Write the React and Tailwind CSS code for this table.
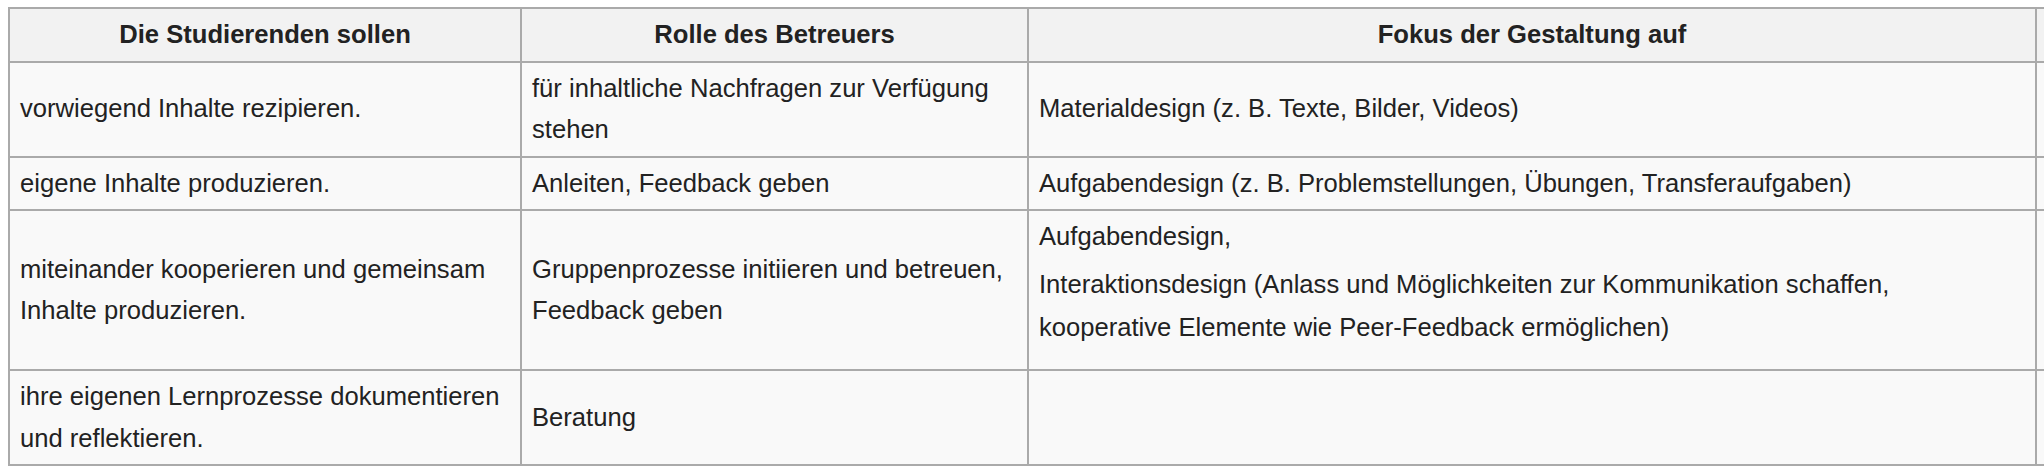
import React from "react";

const cellBorder = "border-r-2 border-b-2 border-[#aaaaaa]";
const th = `${cellBorder} bg-[#f2f2f2] font-bold px-[10px] py-[5px] flex items-center justify-center text-center`;
const td = `${cellBorder} bg-[#f9f9f9] px-[10px] py-[5px] flex flex-col justify-center`;

export default function App() {
  return (
    <div
      className="w-[2044px] h-[472px] overflow-hidden bg-white pl-[8px] pt-[7px] text-[#222222] text-[25.6px] leading-[41.5px]"
      style={{ fontFamily: '"Liberation Sans", Arial, Helvetica, sans-serif' }}
    >
      <div className="grid grid-cols-[512px_507px_1008px_400px] w-max border-l-2 border-t-2 border-[#aaaaaa]">
        <div className={th}>Die Studierenden sollen</div>
        <div className={th}>Rolle des Betreuers</div>
        <div className={th}>Fokus der Gestaltung auf</div>
        <div className={th}></div>

        <div className={td}>vorwiegend Inhalte rezipieren.</div>
        <div className={td}>
          <span>
            für inhaltliche Nachfragen zur Verfügung
            <br />
            stehen
          </span>
        </div>
        <div className={td}>Materialdesign (z. B. Texte, Bilder, Videos)</div>
        <div className={td}></div>

        <div className={td}>eigene Inhalte produzieren.</div>
        <div className={td}>Anleiten, Feedback geben</div>
        <div className={td}>
          Aufgabendesign (z. B. Problemstellungen, Übungen, Transferaufgaben)
        </div>
        <div className={td}></div>

        <div className={td}>
          <span>
            miteinander kooperieren und gemeinsam
            <br />
            Inhalte produzieren.
          </span>
        </div>
        <div className={td}>
          <span>
            Gruppenprozesse initiieren und betreuen,
            <br />
            Feedback geben
          </span>
        </div>
        <div className={`${td} !justify-start`}>
          <p>Aufgabendesign,</p>
          <p className="mt-[5px] mb-[15.5px] leading-[43px]">
            Interaktionsdesign (Anlass und Möglichkeiten zur Kommunikation schaffen,
            <br />
            kooperative Elemente wie Peer-Feedback ermöglichen)
          </p>
        </div>
        <div className={td}></div>

        <div className={td}>
          <span>
            ihre eigenen Lernprozesse dokumentieren
            <br />
            und reflektieren.
          </span>
        </div>
        <div className={td}>Beratung</div>
        <div className={td}></div>
        <div className={td}></div>
      </div>
    </div>
  );
}
